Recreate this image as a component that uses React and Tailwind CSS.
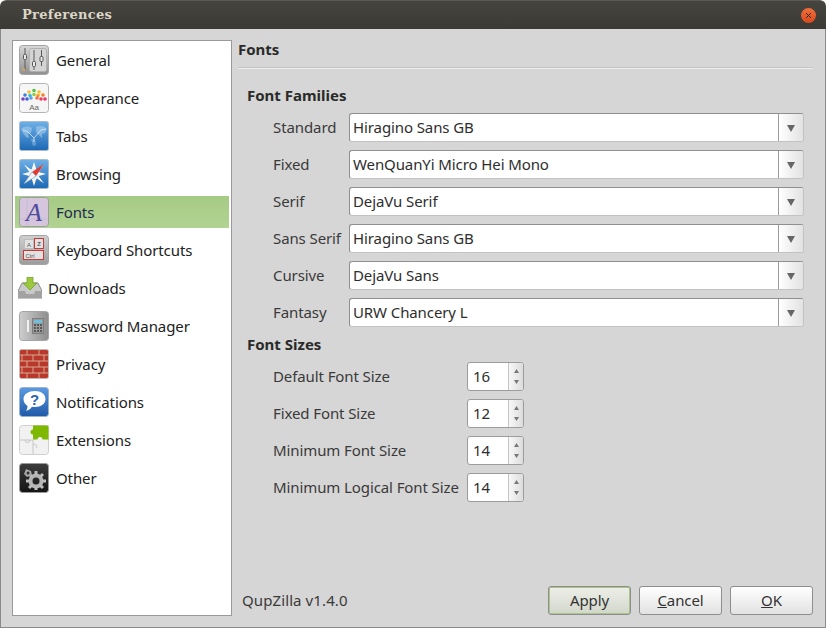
// App.jsx - QupZilla preferences dialog
const Tile = ({ className = "", children }) => (
  <svg width="30" height="30" viewBox="0 0 30 30" className={className}>
    {children}
  </svg>
);

const GeneralIcon = () => (
  <Tile>
    <defs>
      <linearGradient id="gen" x1="0" y1="0" x2="0" y2="1">
        <stop offset="0" stopColor="#d8d8d8" />
        <stop offset="1" stopColor="#8f8f8f" />
      </linearGradient>
    </defs>
    <rect x="0.5" y="0.5" width="29" height="29" rx="3" fill="url(#gen)" stroke="#a5a5a5" />
    <rect x="10.500" y="3.500" width="17" height="23" rx="2" fill="#d4d4d4" stroke="#b0b0b0" />
    <path d="M6 3v22M15 5v20M22.500 5v16" stroke="#5a5a5a" strokeWidth="1" />
    <rect x="4.500" y="9.500" width="3" height="5" rx="1" fill="#ececec" stroke="#555" />
    <rect x="13.500" y="16.500" width="3" height="5" rx="1" fill="#ececec" stroke="#555" />
    <rect x="21" y="11.500" width="3" height="5" rx="1" fill="#ececec" stroke="#555" />
    <rect x="3" y="23" width="3" height="3" fill="#c9a860" opacity="0.8" />
  </Tile>
);

const dots = [
  [10, 9, "#f2c230"], [15, 7.500, "#55c24a"], [20, 9, "#f5c020"], [6, 12, "#3f7fe0"], [11, 12.500, "#3fb8d0"],
  [15, 11.500, "#90cf40"], [19, 12.500, "#f5a020"], [24, 12, "#f58020"], [4, 16, "#8040c0"], [8, 16, "#4060e0"],
  [12, 15, "#60a0e0"], [18, 15, "#f07050"], [22, 16, "#f04060"], [26, 16, "#f03070"],
];

const AppearanceIcon = () => (
  <Tile>
    <rect x="0.5" y="0.5" width="29" height="29" rx="3" fill="#f6f6f6" stroke="#b5b5b5" />
    {dots.map(([x, y, c]) => (
      <circle key={`${x}-${y}`} cx={x} cy={y} r="1.800" fill={c} />
    ))}
    <text x="15" y="27" textAnchor="middle" fontSize="8" fill="#666" fontFamily="Liberation Sans, sans-serif">Aa</text>
  </Tile>
);

const TabsIcon = () => (
  <Tile>
    <defs>
      <linearGradient id="blue" x1="0" y1="0" x2="0" y2="1">
        <stop offset="0" stopColor="#6fb0e6" />
        <stop offset="1" stopColor="#1c68b4" />
      </linearGradient>
    </defs>
    <rect x="0.5" y="0.5" width="29" height="29" rx="2" fill="url(#blue)" stroke="#a9bccd" />
    <path d="M2 8c3-3 8-3 11-1l-1 5-3 1 1 4-3-1-3-4zM17 6c4-2 9-1 11 2l-2 4-3 1v4l-3-3-3-3z" fill="#a7cdee" opacity="0.6" />
    <path d="M12 18l2 7 3-1-1-6z" fill="#a7cdee" opacity="0.45" />
    <path d="M4 9l5 2 6 6 7-8 5-1M15 17v4" fill="none" stroke="#eaf4fc" strokeWidth="0.8" opacity="0.9" />
  </Tile>
);

const BrowsingIcon = () => (
  <Tile>
    <rect x="0.5" y="0.5" width="29" height="29" rx="2" fill="url(#blue)" stroke="#a9bccd" />
    <path d="M15 3l2.500 8L25 5.500 19.500 13 27 15l-7.500 2L25 24.500 17.500 19 15 27l-2.500-8L5 24.500 10.500 17 3 15l7.500-2L5 5.500 12.500 11z" fill="#fff" />
    <circle cx="15" cy="15" r="5.500" fill="#e4eef7" />
    <path d="M25 5l-8 12-4-4z" fill="#e23a30" />
    <path d="M5 25l8-12 4 4z" fill="#f4f4f4" stroke="#6f8aa3" strokeWidth="0.5" />
  </Tile>
);

const FontsIcon = () => (
  <Tile>
    <rect x="0.5" y="0.5" width="29" height="29" rx="3" fill="#d5c6de" stroke="#9d9d9d" />
    <path d="M8 1v28M1 22h28" stroke="#c3b3cd" strokeWidth="0.6" />
    <text x="15" y="24" textAnchor="middle" fontSize="26" fontStyle="italic" fill="#4f4a9b" fontFamily="Liberation Serif, serif">A</text>
  </Tile>
);

const KeyboardIcon = () => (
  <Tile>
    <defs>
      <linearGradient id="key" x1="0" y1="0" x2="0" y2="1">
        <stop offset="0" stopColor="#cfcfcf" />
        <stop offset="1" stopColor="#9c9c9c" />
      </linearGradient>
    </defs>
    <rect x="0.5" y="0.5" width="29" height="29" rx="3" fill="url(#key)" stroke="#a5a5a5" />
    <rect x="5.500" y="4.500" width="9" height="9" fill="#e2e2e2" stroke="#bdbdbd" />
    <rect x="15.500" y="3.500" width="9" height="10" fill="#e2e2e2" stroke="#c93a3a" />
    <rect x="4.500" y="15.500" width="20" height="9" fill="#e2e2e2" stroke="#c93a3a" />
    <text x="10" y="11.500" textAnchor="middle" fontSize="6" fill="#555" fontFamily="Liberation Sans, sans-serif">A</text>
    <text x="20" y="11" textAnchor="middle" fontSize="6" fontWeight="bold" fill="#555" fontFamily="Liberation Sans, sans-serif">Z</text>
    <text x="11" y="22.500" textAnchor="middle" fontSize="6" fill="#555" fontFamily="Liberation Sans, sans-serif">Ctrl</text>
  </Tile>
);

const DownloadsIcon = () => (
  <svg width="24" height="22" viewBox="0 0 24 22">
    <path d="M4 6h16l4 8v7H0v-7z" fill="#c9c9c9" stroke="#8c8c8c" />
    <path d="M0 14h7l1 3h8l1-3h7v7H0z" fill="#a2a2a2" />
    <path d="M9 0h6v6h4l-7 7-7-7h4z" fill="#9cc93c" stroke="#6f9a20" strokeWidth="0.7" />
  </svg>
);

const PasswordIcon = () => (
  <Tile>
    <defs>
      <linearGradient id="safe" x1="0" y1="0" x2="1" y2="0">
        <stop offset="0" stopColor="#cdcdcd" />
        <stop offset="1" stopColor="#8d8d8d" />
      </linearGradient>
    </defs>
    <rect x="0.5" y="0.5" width="29" height="29" rx="3" fill="url(#safe)" stroke="#a5a5a5" />
    <rect x="8" y="9" width="2" height="12" fill="#f0f0f0" />
    <rect x="13.500" y="7.500" width="11" height="15" fill="#9a9a9a" stroke="#7d7d7d" />
    <rect x="15" y="9" width="8" height="3" fill="#6ec0e0" />
    <path d="M15 14h2M18 14h2M21 14h2M15 17h2M18 17h2M21 17h2M15 20h2M18 20h2M21 20h2" stroke="#444" strokeWidth="1.500" />
  </Tile>
);

const PrivacyIcon = () => (
  <Tile>
    <rect x="0.5" y="0.5" width="29" height="29" rx="2" fill="#b8392c" stroke="#c8b8b0" />
    <path d="M1 6h28M1 12h28M1 18h28M1 24h28M8 1v5M20 1v5M3 6v6M14 6v6M25 6v6M8 12v6M20 12v6M3 18v6M14 18v6M25 18v6M8 24v5M20 24v5" stroke="#d9a98f" strokeWidth="1" />
  </Tile>
);

const NotificationsIcon = () => (
  <Tile>
    <defs>
      <linearGradient id="note" x1="0" y1="0" x2="0" y2="1">
        <stop offset="0" stopColor="#5b9ae0" />
        <stop offset="1" stopColor="#1f5aa8" />
      </linearGradient>
    </defs>
    <rect x="0.5" y="0.5" width="29" height="29" rx="3" fill="url(#note)" stroke="#9ab2cc" />
    <path d="M16 4c6 0 10.500 3.200 10.500 8s-4.500 8-10.500 8c-1 0-2 0-3-.2-1.500 2-3.500 3.700-6 4.200 1-1.500 1.500-3 1.500-5C6 17.300 4.500 15 4.500 12c0-4.800 5-8 11.500-8z" fill="#fff" />
    <text x="15.500" y="18" textAnchor="middle" fontSize="15" fontWeight="bold" fill="#2a65b0" fontFamily="Liberation Sans, sans-serif">?</text>
  </Tile>
);

const ExtensionsIcon = () => (
  <Tile>
    <rect x="0.5" y="0.5" width="29" height="29" rx="3" fill="#f1f1f1" stroke="#cfcfcf" />
    <rect x="14" y="0.5" width="15.500" height="14" fill="#7fb800" />
    <circle cx="14" cy="7" r="2.500" fill="#7fb800" />
    <circle cx="21" cy="14.500" r="2.500" fill="#f1f1f1" />
    <path d="M1 15h13M14 15v14M14 20a2 2 0 0 1 3 3" fill="none" stroke="#c6c6c6" strokeWidth="1" />
    <path d="M6 15a2.500 2.500 0 0 0 5 0" fill="none" stroke="#c6c6c6" strokeWidth="1" />
  </Tile>
);

const OtherIcon = () => (
  <Tile>
    <defs>
      <linearGradient id="oth" x1="0" y1="0" x2="0" y2="1">
        <stop offset="0" stopColor="#3c3c3c" />
        <stop offset="1" stopColor="#141414" />
      </linearGradient>
    </defs>
    <rect x="0.5" y="0.5" width="29" height="29" rx="3" fill="url(#oth)" stroke="#9a9a9a" />
    <circle cx="17" cy="18" r="5.500" fill="none" stroke="#b4b4b4" strokeWidth="4" />
    <path d="M17 8v4M17 24v3M7 18h4M23 18h4M10 11l3 3M21 22l3 3M24 11l-3 3M13 22l-3 3" stroke="#bcbcbc" strokeWidth="3" />
    <path d="M7 6l5 2 1 4-5 2-3-3z" fill="#a8a8a8" />
    <circle cx="9" cy="10" r="1.500" fill="#333" />
  </Tile>
);

const pages = [
  { name: "General", icon: <GeneralIcon /> },
  { name: "Appearance", icon: <AppearanceIcon /> },
  { name: "Tabs", icon: <TabsIcon /> },
  { name: "Browsing", icon: <BrowsingIcon /> },
  { name: "Fonts", icon: <FontsIcon />, active: true },
  { name: "Keyboard Shortcuts", icon: <KeyboardIcon /> },
  { name: "Downloads", icon: <DownloadsIcon />, small: true },
  { name: "Password Manager", icon: <PasswordIcon /> },
  { name: "Privacy", icon: <PrivacyIcon /> },
  { name: "Notifications", icon: <NotificationsIcon /> },
  { name: "Extensions", icon: <ExtensionsIcon /> },
  { name: "Other", icon: <OtherIcon /> },
];

const families = [
  ["Standard", "Hiragino Sans GB"],
  ["Fixed", "WenQuanYi Micro Hei Mono"],
  ["Serif", "DejaVu Serif"],
  ["Sans Serif", "Hiragino Sans GB"],
  ["Cursive", "DejaVu Sans"],
  ["Fantasy", "URW Chancery L"],
];

const sizes = [
  ["Default Font Size", 16],
  ["Fixed Font Size", 12],
  ["Minimum Font Size", 14],
  ["Minimum Logical Font Size", 14],
];

function Combo({ value }) {
  return (
    <div className="flex h-[29px] w-[455px] rounded-[3px] border border-[#c2c2c2] border-t-[#8f8f8f] border-l-[#8f8f8f] bg-white">
      <div className="flex-1 pl-[3px] leading-[26px] text-[#2e2e2e]">{value}</div>
      <div className="flex w-[25px] items-center justify-center rounded-r-[3px] border-l border-[#9a9a9a] bg-gradient-to-r from-white to-[#e2e2e2]">
        <svg width="8" height="8" viewBox="0 0 8 8">
          <path d="M0 1h8L4 8z" fill="#666" />
        </svg>
      </div>
    </div>
  );
}

function Spin({ value }) {
  return (
    <div className="flex h-[29px] w-[57px] rounded-[3px] border border-[#9c9c9c] bg-white">
      <div className="flex-1 pl-[5px] leading-[27px] text-[#2e2e2e]">{value}</div>
      <div className="flex w-[15px] flex-col items-center justify-between rounded-r-[3px] border-l border-[#c4c4c4] bg-gradient-to-r from-[#f8f8f8] to-[#dcdcdc] py-[6px]">
        <svg width="5" height="4" viewBox="0 0 5 4">
          <path d="M2.500 0L5 4H0z" fill="#777" />
        </svg>
        <svg width="5" height="4" viewBox="0 0 5 4">
          <path d="M0 0h5L2.500 4z" fill="#777" />
        </svg>
      </div>
    </div>
  );
}

function DialogButton({ children, isDefault }) {
  return (
    <button
      className={`h-[29px] w-[83px] rounded-[3px] border border-[#8e8e8e] text-[15px] leading-none text-[#333] ${
        isDefault
          ? "bg-gradient-to-b from-[#eef0e8] to-[#d3d6cb] shadow-[inset_0_0_0_1px_#a9c48c]"
          : "bg-gradient-to-b from-white to-[#e2e2e2]"
      }`}
    >
      {children}
    </button>
  );
}

export default function App() {
  return (
    <div className="flex h-[628px] w-[826px] flex-col overflow-hidden rounded-t-[6px] bg-[#d6d6d6] font-['Noto_Sans',sans-serif] text-[15px] tracking-[-0.1px] text-[#3a3a3a]">
      <div className="flex h-[29px] shrink-0 items-center justify-between rounded-t-[6px] border-t border-[#5c5a52] bg-gradient-to-b from-[#46443e] to-[#3b3a35] pl-[22px] pr-[10px]">
        <span className="font-['DejaVu_Serif',serif] text-[13px] font-bold tracking-[0.3px] text-[#dcd6c8]">Preferences</span>
        <div className="flex h-[15px] w-[15px] items-center justify-center rounded-full bg-gradient-to-b from-[#f0703a] to-[#d9481c]">
          <svg width="7" height="7" viewBox="0 0 7 7">
            <path d="M1 1l5 5M6 1L1 6" stroke="#3b2a20" strokeWidth="1" />
          </svg>
        </div>
      </div>

      <div className="flex min-h-0 flex-1 border-x border-b border-[#8a8a8a]">
        <div className="mb-[11px] ml-[11px] mt-[11px] flex w-[220px] flex-col gap-[6px] border border-[#9a9a9a] bg-white px-[2px] pt-[3px] text-[#222]">
          {pages.map((p) => (
            <div
              key={p.name}
              className={`flex h-[32px] items-center ${p.small ? "gap-[6px] pl-[3px]" : "gap-[7px] pl-[4px]"} ${
                p.active ? "bg-gradient-to-b from-[#a6cb85] to-[#b2d392] text-[#1d2a4d]" : ""
              }`}
            >
              {p.icon}
              <span>{p.name}</span>
            </div>
          ))}
        </div>

        <div className="ml-[6px] mr-[12px] flex min-w-0 flex-1 flex-col">
          <div className="flex h-[40px] shrink-0 items-center border-b border-[#eeeeee] pb-[7px] pt-[9px] text-[15px] font-bold leading-none tracking-normal text-[#2a2a2a] shadow-[inset_0_-1px_0_#c4c4c4]">
            Fonts
          </div>

          <div className="flex flex-1 flex-col pl-[9px]">
            <h2 className="mt-[16px] text-[15px] font-bold leading-[20px] tracking-normal text-[#2a2a2a]">Font Families</h2>
            <div className="mt-[8px] flex flex-col gap-[8px]">
              {families.map(([label, value]) => (
                <div key={label} className="flex items-center">
                  <span className="w-[102px] pl-[26px]">{label}</span>
                  <Combo value={value} />
                </div>
              ))}
            </div>

            <h2 className="mt-[7px] text-[15px] font-bold leading-[20px] tracking-normal text-[#2a2a2a]">Font Sizes</h2>
            <div className="mt-[8px] flex flex-col gap-[8px]">
              {sizes.map(([label, value]) => (
                <div key={label} className="flex items-center">
                  <span className="w-[220px] whitespace-nowrap pl-[26px]">{label}</span>
                  <Spin value={value} />
                </div>
              ))}
            </div>
          </div>

          <div className="mb-[12px] flex items-center justify-between pl-[4px]">
            <span className="tracking-[0.1px]">QupZilla v1.4.0</span>
            <div className="flex gap-[8px]">
              <DialogButton isDefault>Apply</DialogButton>
              <DialogButton>
                <u>C</u>ancel
              </DialogButton>
              <DialogButton>
                <u>O</u>K
              </DialogButton>
            </div>
          </div>
        </div>
      </div>
    </div>
  );
}
